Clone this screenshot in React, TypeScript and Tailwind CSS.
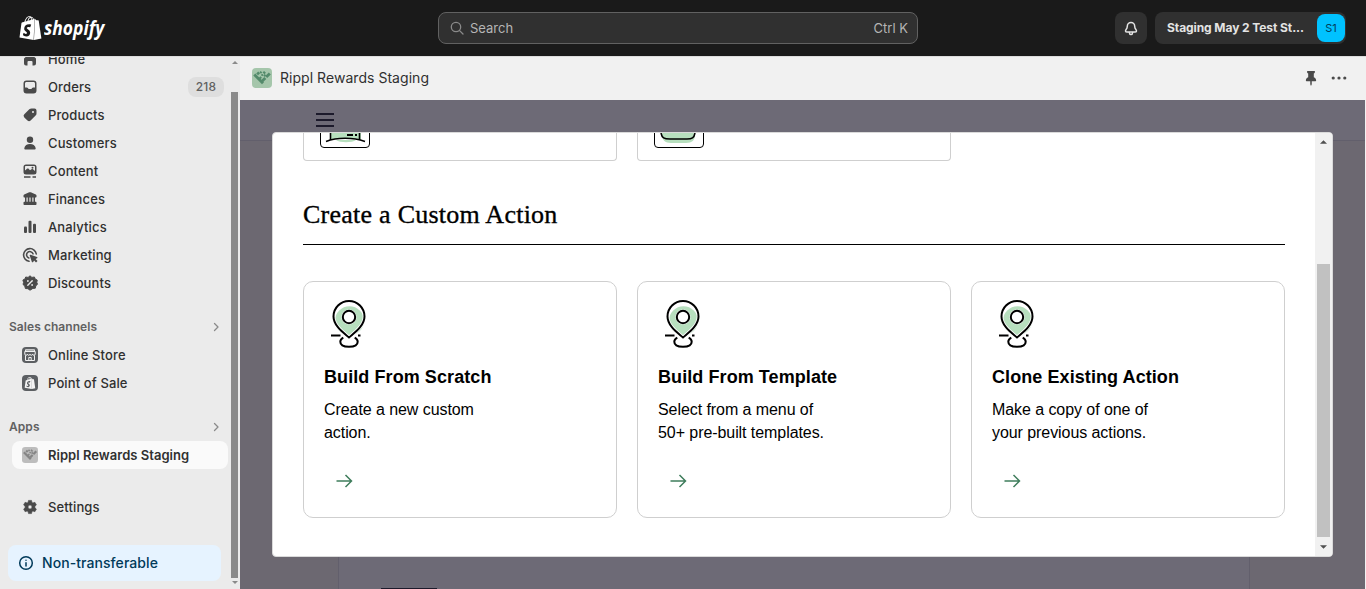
import type { ReactNode } from "react";
import { SiShopify } from "react-icons/si";

type IconProps = { children: ReactNode; className?: string };

function Glyph({ children, className = "size-5 text-[#4a4a4a]" }: IconProps) {
  return (
    <svg viewBox="0 0 20 20" fill="currentColor" className={className}>
      {children}
    </svg>
  );
}

const icons = {
  home: <path d="M4 9.500 10 4l6 5.500v5a2 2 0 0 1-2 2h-1.500v-3.500a1 1 0 0 0-1-1h-3a1 1 0 0 0-1 1v3.500H6a2 2 0 0 1-2-2z" />,
  orders: (
    <path
      fillRule="evenodd"
      d="M6.500 3.500h7a3 3 0 0 1 3 3v7a3 3 0 0 1-3 3h-7a3 3 0 0 1-3-3v-7a3 3 0 0 1 3-3ZM6.500 5C5.600 5 5 5.600 5 6.500V10.500h1.700c.5 0 .9.200 1.200.600l.5.600c.2.200.4.300.6.300h2c.2 0 .5-.1.600-.3l.5-.6c.3-.4.700-.6 1.200-.6H15v-4c0-.9-.6-1.500-1.500-1.500z"
    />
  ),
  products: (
    <path
      fillRule="evenodd"
      d="M11.600 3.500h2.900a2 2 0 0 1 2 2v2.900c0 .8-.3 1.600-.9 2.200l-5 5a2.200 2.200 0 0 1-3.100 0l-3.200-3.200a2.200 2.200 0 0 1 0-3.100l5-5c.6-.5 1.400-.8 2.300-.8Zm1.400 4.500a1 1 0 1 0 0-2 1 1 0 0 0 0 2Z"
    />
  ),
  customers: (
    <>
      <circle cx="10" cy="6.700" r="3.200" />
      <path d="M4.300 15.200c.3-2.600 2.800-4.200 5.700-4.200s5.400 1.600 5.700 4.200c.1.700-.5 1.300-1.200 1.300h-9c-.7 0-1.300-.6-1.200-1.300Z" />
    </>
  ),
  content: (
    <>
      <path
        fillRule="evenodd"
        d="M6 3.500h8a2.500 2.500 0 0 1 2.500 2.500v5a2.500 2.500 0 0 1-2.500 2.500H6A2.500 2.500 0 0 1 3.500 11V6A2.500 2.500 0 0 1 6 3.500ZM5 6v3.500l2-1.700c.5-.4 1.200-.4 1.600 0l1.400 1.400 1.500-1c.5-.3 1.100-.3 1.500.1L15 9.900V6c0-.6-.4-1-1-1H6c-.6 0-1 .4-1 1Zm7.500 1.700a1 1 0 1 0 0-2 1 1 0 0 0 0 2Z"
      />
      <path d="M4 15.200h6.500v1.500H4zM12.500 15.200H16v1.500h-3.500z" />
    </>
  ),
  finances: (
    <path
      fillRule="evenodd"
      d="M9.200 3.300a2 2 0 0 1 1.600 0l5 2.300c.4.200.7.600.7 1v.9c0 .6-.4 1-1 1h-.5v4.200h.5c.6 0 1 .4 1 1V15c0 .6-.4 1-1 1h-11c-.6 0-1-.4-1-1v-1.300c0-.6.4-1 1-1H5V8.500h-.5c-.6 0-1-.4-1-1v-.9c0-.4.3-.8.7-1zM6.500 8.500v4.200h1.200V8.500zm2.900 0v4.200h1.200V8.500zm2.900 0v4.200h1.200V8.500z"
    />
  ),
  analytics: (
    <>
      <rect x="4" y="9.500" width="3" height="6.500" rx="1" />
      <rect x="8.500" y="3.800" width="3" height="12.200" rx="1" />
      <rect x="13" y="6.800" width="3" height="9.200" rx="1" />
    </>
  ),
  marketing: (
    <>
      <path d="M16.300 9A6.400 6.400 0 1 0 9 16.300M13 8.800A3.300 3.300 0 1 0 8.800 13" fill="none" stroke="currentColor" strokeWidth="1.600" strokeLinecap="round" />
      <path d="M9.700 10.500c-.2-.5.300-1 .8-.8l6.500 2.200c.6.200.6 1 .1 1.300l-1.500.8 1.900 1.900-1.500 1.500-1.900-1.900-.9 1.500c-.3.500-1.100.5-1.300-.1z" />
    </>
  ),
  discounts: (
    <>
      <path
        d="M10 2.800 11.900 4.400 14.400 4l.8 2.100 2 .9-.4 2.400.7 1.900-1.700 1.500-.5 2.400-2.400.2L10 17.200l-2.100-1.500-2.500-.2-.6-2.400L3 11.400l.6-2L2.900 7l2-.9.8-2.100 2.400.4z"
        stroke="currentColor"
        strokeLinejoin="round"
        strokeWidth="1"
      />
      <path d="m7.800 12.200 4.400-4.400" stroke="#ebebeb" strokeWidth="1.400" strokeLinecap="round" />
      <circle cx="7.900" cy="8" r=".9" fill="#ebebeb" />
      <circle cx="12.100" cy="12" r=".9" fill="#ebebeb" />
    </>
  ),
  settings: (
    <path
      fillRule="evenodd"
      d="M8.500 3.400h3l.5 2 .9.500 2-.6 1.500 2.600-1.500 1.400v1.400l1.500 1.400-1.500 2.600-2-.6-.9.500-.5 2h-3l-.5-2-.9-.5-2 .6-1.500-2.600 1.500-1.400V9.300L3.600 7.900l1.500-2.600 2 .6.900-.5ZM10 12a2 2 0 1 0 0-4 2 2 0 0 0 0 4Z"
      stroke="currentColor"
      strokeWidth=".6"
      strokeLinejoin="round"
    />
  ),
};

function RipplMark({ className, bg, fg }: { className: string; bg: string; fg: string }) {
  return (
    <svg viewBox="0 0 20 20" className={className}>
      <rect width="20" height="20" rx="4" fill={bg} />
      <g stroke={fg} strokeWidth="2.800" fill="none">
        <path d="m2.300 6.500 8.700 8.700" />
        <path d="m10.200 13 3.100-3.100m.9-.9L17.800 5.400" />
        <path d="m5.200 4.400 1.900 1.900" />
        <path d="m7.700 9 1.500 1.500M8.200 5l1.300-1.300M11.300 3.700l1.900 1.900M13.500 6.800 12 8.300" strokeWidth="2.100" />
      </g>
      <circle cx="10.200" cy="7" r="1.100" fill={fg} />
    </svg>
  );
}

function NavItem({ icon, label, badge }: { icon: ReactNode; label: string; badge?: string }) {
  return (
    <li className="flex h-7 shrink-0 items-center pl-5 pr-[7px]">
      {icon}
      <span className="ml-2 flex-1 text-[13px] font-[450] leading-5 tracking-[0.12px] text-[#303030]">{label}</span>
      {badge && (
        <span className="flex h-5 w-9 items-center justify-center rounded-lg bg-[#dedede] text-xs font-[450] leading-5 tracking-[0.2px] text-[#616161]">
          {badge}
        </span>
      )}
    </li>
  );
}

function SectionTitle({ label }: { label: string }) {
  return (
    <div className="flex h-7 shrink-0 items-center justify-between pl-[9px] pr-[3px] text-xs font-semibold tracking-[0.06px] text-[#616161]">
      {label}
      <Glyph className="size-5 text-[#8a8a8a]">
        <path d="m8.500 6.500 3.500 3.500-3.500 3.500" fill="none" stroke="currentColor" strokeWidth="1.300" strokeLinecap="round" strokeLinejoin="round" />
      </Glyph>
    </div>
  );
}

function Triangle({ down, className }: { down?: boolean; className: string }) {
  return (
    <svg viewBox="0 0 8 4" className={className} fill="currentColor">
      <path d={down ? "M0 0h8L4 4z" : "M0 4h8L4 0z"} />
    </svg>
  );
}

function Header() {
  return (
    <header className="flex h-14 shrink-0 items-center bg-[#1a1a1a] pl-[18px] pr-5">
      <div className="flex w-[420px] items-center text-white">
        <SiShopify className="h-6 w-[25px]" preserveAspectRatio="none" />
        <span className="ml-px origin-left scale-x-[0.92] font-['Open_Sans',sans-serif] text-[19px] font-bold italic leading-6">shopify</span>
      </div>
      <div className="flex h-8 w-[480px] items-center rounded-lg border border-[#616161] bg-[#303030] pl-2 pr-[9px] text-[13px] text-[#b5b5b5]">
        <svg viewBox="0 0 20 20" className="size-5 text-[#8a8a8a]" fill="none" stroke="currentColor" strokeWidth="1.300" strokeLinecap="round">
          <circle cx="9" cy="9" r="4.700" />
          <path d="m12.600 12.600 3.400 3.400" />
        </svg>
        <span className="ml-[3px] flex-1 leading-5">Search</span>
        <span className="leading-5">Ctrl K</span>
      </div>
      <div className="ml-auto flex h-8 w-8 items-center justify-center rounded-lg bg-[#303030]">
        <svg viewBox="0 0 20 20" className="size-5 text-[#e3e3e3]" fill="none" stroke="currentColor" strokeWidth="1.500" strokeLinejoin="round" strokeLinecap="round">
          <path d="M6.300 8.200a3.700 3.700 0 0 1 7.400 0c0 1.600.4 2.300 1.200 3.300.9 1.100.8 2.600-.9 2.600H6c-1.700 0-1.800-1.500-.9-2.600.8-1 1.200-1.700 1.200-3.300Z" />
          <path d="M8.300 14.500c.1 1.300.8 2 1.700 2s1.600-.7 1.700-2" />
        </svg>
      </div>
      <div className="ml-2 flex h-8 w-[191px] items-center rounded-lg bg-[#303030] pl-3 pr-[1px]">
        <span className="flex-1 whitespace-nowrap text-xs font-bold tracking-[-0.08px] text-[#e3e3e3]">Staging May 2 Test St...</span>
        <span className="flex size-7 items-center justify-center rounded-lg bg-[#00c2ff] text-[11px] text-[#003d59]">S1</span>
      </div>
    </header>
  );
}

function Sidebar() {
  return (
    <aside className="flex w-60 shrink-0 overflow-hidden border-t border-[#dcdcdc] bg-[#ebebeb]">
      <nav className="flex w-[231px] flex-col">
        <ul className="-mt-3 flex flex-col">
          <NavItem icon={<Glyph>{icons.home}</Glyph>} label="Home" />
          <NavItem icon={<Glyph>{icons.orders}</Glyph>} label="Orders" badge="218" />
          <NavItem icon={<Glyph>{icons.products}</Glyph>} label="Products" />
          <NavItem icon={<Glyph>{icons.customers}</Glyph>} label="Customers" />
          <NavItem icon={<Glyph>{icons.content}</Glyph>} label="Content" />
          <NavItem icon={<Glyph>{icons.finances}</Glyph>} label="Finances" />
          <NavItem icon={<Glyph>{icons.analytics}</Glyph>} label="Analytics" />
          <NavItem icon={<Glyph>{icons.marketing}</Glyph>} label="Marketing" />
          <NavItem icon={<Glyph>{icons.discounts}</Glyph>} label="Discounts" />
        </ul>
        <div className="mt-4 pr-[2px]">
          <SectionTitle label="Sales channels" />
        </div>
        <ul className="flex flex-col">
          <NavItem
            icon={
              <Glyph className="size-5">
                <rect x="2" y="2" width="16" height="16" rx="4" fill="#5c5f62" />
                <path d="M5.500 4.700h9v1.300h-9z" fill="none" stroke="#f1f1f1" strokeWidth=".9" />
                <path
                  d="M5.500 10.300v5.200h9v-5.200M4.800 6.500h10.400V9c0 .8-.6 1.300-1.300 1.300s-1.300-.5-1.300-1.100c0 .6-.6 1.100-1.300 1.100S10 9.800 10 9.200c0 .6-.6 1.100-1.300 1.100s-1.300-.5-1.300-1.100c0 .6-.6 1.100-1.300 1.100S4.800 9.800 4.800 9zM8.800 15.300v-2.800h2.400v2.800"
                  fill="none"
                  stroke="#f1f1f1"
                  strokeWidth="1"
                />
              </Glyph>
            }
            label="Online Store"
          />
          <NavItem
            icon={
              <span className="m-0.5 flex size-4 items-center justify-center rounded bg-[#5c5f62] text-[#f4f4f4]">
                <SiShopify className="size-3" />
              </span>
            }
            label="Point of Sale"
          />
        </ul>
        <div className="mt-4 pr-[2px]">
          <SectionTitle label="Apps" />
        </div>
        <div className="ml-3 mr-[3px] flex h-7 shrink-0 items-center rounded-lg bg-[#fafafa] pl-[10px]">
          <RipplMark className="size-4" bg="#bdbdbd" fg="#858585" />
          <span className="ml-[10px] text-[13px] font-semibold leading-5 tracking-[0.03px] text-[#303030]">Rippl Rewards Staging</span>
        </div>
        <ul className="mt-6 flex flex-col">
          <NavItem icon={<Glyph>{icons.settings}</Glyph>} label="Settings" />
        </ul>
        <div className="ml-2 mr-[10px] mt-6 flex h-9 shrink-0 items-center rounded-lg bg-[#e6f3ff] pl-2 text-[#003a5a]">
          <svg viewBox="0 0 20 20" className="size-5" fill="none" stroke="currentColor" strokeWidth="1.500" strokeLinecap="round">
            <circle cx="10" cy="10" r="6.300" />
            <path d="M10 9.700v3.300M10 7.200v.1" />
          </svg>
          <span className="ml-[6px] text-sm font-medium tracking-[0.07px]">Non-transferable</span>
        </div>
      </nav>
      <div className="flex w-[7px] flex-col items-center pt-1">
        <Triangle className="h-[3px] w-[6px] text-[#8a8a8a]" />
        <div className="mt-7 h-[486px] w-[7px] shrink-0 bg-[#8a8a8a]" />
        <Triangle down className="mt-[3px] h-[3px] w-[6px] text-[#8a8a8a]" />
      </div>
    </aside>
  );
}

function PinDrawing() {
  return (
    <svg viewBox="0 0 50 54" className="h-[54px] w-[50px]" fill="none">
      <circle cx="25.500" cy="21.800" r="14.500" fill="#b7dfbe" />
      <path d="M25 38.500C20 34 9.500 27 9.500 17.500a15.500 15.500 0 0 1 31 0C40.500 27 30 34 25 38.500Z" stroke="#fff" strokeWidth="3.600" />
      <path d="M25 38.500C20 34 9.500 27 9.500 17.500a15.500 15.500 0 0 1 31 0C40.500 27 30 34 25 38.500Z" stroke="#000" strokeWidth="2" strokeLinejoin="round" />
      <circle cx="25" cy="18" r="7.600" fill="#fff" />
      <circle cx="25" cy="18" r="6.200" stroke="#000" strokeWidth="2" />
      <path d="M7 36.500h9.500M34 36.500h2.500" stroke="#000" strokeWidth="2" />
      <path d="M19.300 38.600c-2 1-3 2.400-3 4.200 0 3.300 3.600 5 8.700 5s8.700-1.700 8.700-5c0-1.800-1-3.200-3-4.200" stroke="#000" strokeWidth="2" />
    </svg>
  );
}

function ActionCard({ title, lines }: { title: string; lines: [string, string] }) {
  return (
    <article className="flex h-[237px] flex-col rounded-[10px] border border-[#cfcfcf] pl-5 pt-[17px] text-black">
      <PinDrawing />
      <h3 className="mt-3 whitespace-nowrap text-[18px] font-bold leading-6 tracking-[0.08px]">{title}</h3>
      <p className="mt-[9px] text-base leading-[23px] tracking-[-0.07px]">
        {lines[0]}
        <br />
        {lines[1]}
      </p>
      <svg viewBox="0 0 16 14" className="ml-3 mt-[30px] h-[14px] w-[17px] shrink-0" fill="none" stroke="#3f7d5c" strokeWidth="1.500">
        <path d="M0 7h15M9 1l6 6-6 6" />
      </svg>
    </article>
  );
}

const cards: { title: string; lines: [string, string] }[] = [
  { title: "Build From Scratch", lines: ["Create a new custom", "action."] },
  { title: "Build From Template", lines: ["Select from a menu of", "50+ pre-built templates."] },
  { title: "Clone Existing Action", lines: ["Make a copy of one of", "your previous actions."] },
];

function Modal() {
  return (
    <section className="flex h-[425px] w-[1061px] overflow-hidden rounded border border-[#dadada] bg-white font-['Liberation_Sans',Arial,sans-serif]">
      <div className="flex w-[1042px] shrink-0 flex-col pl-[30px] pr-[30px]">
        <div className="grid h-7 shrink-0 grid-cols-3 gap-5">
          <div className="rounded-b border border-t-0 border-[#cfcfcf] pl-4">
            <svg viewBox="0 0 50 15" className="h-[15px] w-[50px]" fill="none">
              <path d="M10 0h31v6.500c-10-2-21-2-31 0z" fill="#b7dfbe" />
              <path d="M16 7h20c-4 3-16 3-20 0Z" fill="#b7dfbe" />
              <path d="M10.500 0v7M39.500 0v7" stroke="#000" strokeWidth="1.600" />
              <path d="M6 8.500c11-4.300 27-4.300 39 0" stroke="#000" strokeWidth="1.600" />
              <path d="M27 2h6M35 2h2" stroke="#000" strokeWidth="1.800" />
              <path d="M.5 0v11a3.500 3.500 0 0 0 3.500 3.500h42a3.500 3.500 0 0 0 3.500-3.500V0" stroke="#000" />
            </svg>
          </div>
          <div className="rounded-b border border-t-0 border-[#cfcfcf] pl-4">
            <svg viewBox="0 0 50 15" className="h-[15px] w-[50px]" fill="none">
              <path d="M7 0h34v2c0 5-3 8-9 8H17C11 10 8 7 7 0Z" fill="#b7dfbe" />
              <path d="M7 0c1 5 3 6 9 6h17c5 0 7-1 8-6" stroke="#000" strokeWidth="1.600" />
              <path d="M.5 0v11a3.500 3.500 0 0 0 3.500 3.500h42a3.500 3.500 0 0 0 3.500-3.500V0" stroke="#000" />
            </svg>
          </div>
        </div>
        <h2 className="mt-[37px] whitespace-nowrap font-['Liberation_Serif',serif] text-[26px] leading-[34px] tracking-[0.25px] text-black [-webkit-text-stroke:0.35px_black]">
          Create a Custom Action
        </h2>
        <div className="mt-3 h-px shrink-0 bg-black" />
        <div className="mt-9 grid grid-cols-3 gap-5">
          {cards.map((c) => (
            <ActionCard key={c.title} {...c} />
          ))}
        </div>
      </div>
      <div className="flex w-[17px] shrink-0 flex-col items-center bg-[#f1f1f1] pt-[7px]">
        <Triangle className="h-1 w-[7px] shrink-0 text-[#505050]" />
        <div className="mt-[120px] h-[273px] w-[13px] shrink-0 bg-[#c1c1c1]" />
        <Triangle down className="mt-2 h-1 w-[7px] shrink-0 text-[#505050]" />
      </div>
    </section>
  );
}

export default function App() {
  return (
    <div className="flex h-[589px] w-[1366px] flex-col overflow-hidden font-[Inter,sans-serif]">
      <Header />
      <div className="flex h-[533px]">
        <Sidebar />
        <main className="flex flex-1 flex-col bg-[#f1f1f1]">
          <div className="flex h-11 shrink-0 items-center border-t border-[#dcdcdc] pb-px pl-3 pr-[19px]">
            <RipplMark className="size-5" bg="#a5c6ab" fg="#538a6b" />
            <h1 className="ml-2 flex-1 text-sm tracking-[0.04px] text-[#303030]">Rippl Rewards Staging</h1>
            <svg viewBox="0 0 12 16" className="mr-[14px] h-[15px] w-3" fill="#4a4a4a">
              <path d="M2.500 0h7c.5 0 .8.400.8.800 0 .9-.6 1.500-1.300 1.900v4c1.500.7 2.500 1.800 2.500 3.400 0 .4-.3.700-.7.700H6.800V14L6 16l-.8-2v-3.200h-4c-.4 0-.7-.3-.7-.7 0-1.600 1-2.700 2.500-3.400v-4C2.300 2.300 1.700 1.700 1.700.8c0-.4.3-.8.8-.8Z" />
            </svg>
            <svg viewBox="0 0 16 4" className="h-1 w-4" fill="#4a4a4a">
              <circle cx="2.200" cy="2" r="1.600" />
              <circle cx="8" cy="2" r="1.600" />
              <circle cx="13.800" cy="2" r="1.600" />
            </svg>
          </div>
          <div className="relative mr-px flex flex-1 flex-col bg-[#6c6871]">
            <div className="h-[41px] shrink-0 border-b border-[#625f6c] bg-[#6d6a76] pl-[76px] pt-[13px]">
              <svg viewBox="0 0 18 14" className="h-[14px] w-[18px]" stroke="#1c1a2b" strokeWidth="2">
                <path d="M0 1h18M0 7h18M0 13h18" />
              </svg>
            </div>
            <div className="ml-[98px] flex w-[912px] flex-1 items-end border-x border-[#625f6c] bg-[#6d6a76] pl-[42px]">
              <div className="h-px w-14 bg-[#1c1a2b]" />
            </div>
            <div className="absolute inset-0 flex pl-8 pt-8">
              <Modal />
            </div>
          </div>
        </main>
      </div>
    </div>
  );
}
